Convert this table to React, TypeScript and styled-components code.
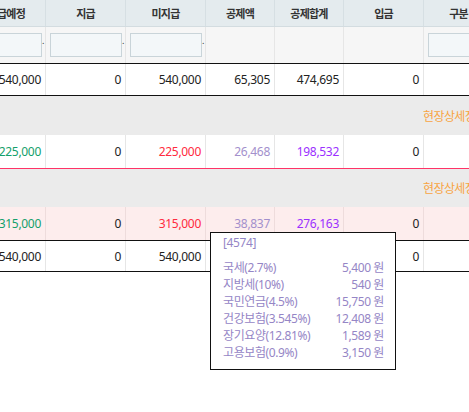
import React from 'react';
import styled, { createGlobalStyle } from 'styled-components';

const GlobalStyle = createGlobalStyle`
  html, body { margin: 0; padding: 0; background: #fff; overflow: hidden; }
  body { font-family: "Noto Sans", "Noto Sans CJK KR", sans-serif; }
`;

const COLS = '45px 80px 80px 69px 69px 80px 70px';

const Page = styled.div`
  position: relative;
  width: 469px;
  height: 412px;
  overflow: hidden;
`;

const Grid = styled.div`
  width: 493px;
`;

const Row = styled.div<{ $h: number; $bg?: string; $top?: string; $bottom?: string; $line?: string }>`
  display: grid;
  grid-template-columns: ${COLS};
  height: ${(p) => p.$h}px;
  background: ${(p) => p.$bg || '#fff'};
  border-top: ${(p) => (p.$top ? `1px solid ${p.$top}` : 'none')};
  border-bottom: ${(p) => (p.$bottom ? `1px solid ${p.$bottom}` : 'none')};
  --line: ${(p) => p.$line || '#e6e6e6'};
`;

const HeadCell = styled.div<{ $end?: boolean }>`
  display: flex;
  align-items: center;
  justify-content: ${(p) => (p.$end ? 'flex-end' : 'center')};
  padding-right: ${(p) => (p.$end ? '20px' : '0')};
  overflow: hidden;
  white-space: nowrap;
  font-family: "Noto Sans CJK KR", sans-serif;
  font-size: 11px;
  font-weight: 700;
  letter-spacing: -0.8px;
  color: #333;
  & + & { border-left: 1px solid var(--line); }
`;

const FilterCell = styled.div<{ $end?: boolean }>`
  display: flex;
  align-items: center;
  justify-content: ${(p) => (p.$end ? 'flex-end' : 'flex-start')};
  padding-left: ${(p) => (p.$end ? '0' : '4px')};
  overflow: hidden;
  white-space: nowrap;
  & + & { border-left: 1px solid var(--line); }
`;

const FilterInput = styled.input`
  box-sizing: border-box;
  flex: none;
  width: 72px;
  height: 24px;
  margin: 0;
  padding: 0 4px;
  border: 1px solid #c9d4d9;
  border-radius: 0;
  background: #f3f7f9;
  outline: none;
`;

const Dot = styled.span`
  flex: none;
  width: 3px;
  font-size: 9px;
  line-height: 9px;
  color: #333;
  margin-bottom: 10px;
`;

const NumCell = styled.div<{ $color?: string }>`
  display: flex;
  align-items: center;
  justify-content: flex-end;
  padding-right: 4px;
  overflow: hidden;
  white-space: nowrap;
  font-size: 12px;
  letter-spacing: -0.3px;
  color: ${(p) => p.$color || '#222'};
  & + & { border-left: 1px solid var(--line); }
`;

const SpacerCell = styled.div<{ $span: number }>`
  grid-column: span ${(p) => p.$span};
`;

const DetailLink = styled.div`
  display: flex;
  align-items: center;
  overflow: hidden;
  white-space: nowrap;
  font-size: 12px;
  letter-spacing: -0.6px;
  color: #f8a443;
`;

const Tooltip = styled.div`
  position: absolute;
  left: 210px;
  top: 232px;
  box-sizing: border-box;
  width: 186px;
  height: 138px;
  padding: 1px 11px 8px 12px;
  background: #fff;
  border: 1px solid #111;
  color: #9586c6;
  font-size: 12px;
  letter-spacing: -0.4px;
`;

const TipTitle = styled.div`
  line-height: 17px;
  margin-bottom: 8px;
`;

const TipRow = styled.div`
  display: flex;
  justify-content: space-between;
  line-height: 17px;
  white-space: nowrap;
`;

const GREEN = '#13a06b';
const RED = '#ff2a40';
const LAV = '#a390cc';
const PURPLE = '#9b30ff';

type CellDef = { v: string; c?: string };

const heads = ['지급예정', '지급', '미지급', '공제액', '공제합계', '입금', '구분'];

const r1: CellDef[] = [{ v: '540,000' }, { v: '0' }, { v: '540,000' }, { v: '65,305' }, { v: '474,695' }, { v: '0' }, { v: '' }];
const r2: CellDef[] = [
  { v: '225,000', c: GREEN }, { v: '0' }, { v: '225,000', c: RED }, { v: '26,468', c: LAV }, { v: '198,532', c: PURPLE }, { v: '0' }, { v: '' },
];
const r3: CellDef[] = [
  { v: '315,000', c: GREEN }, { v: '0' }, { v: '315,000', c: RED }, { v: '38,837', c: LAV }, { v: '276,163', c: PURPLE }, { v: '0' }, { v: '' },
];
const r4: CellDef[] = [{ v: '540,000' }, { v: '0' }, { v: '540,000' }, { v: '' }, { v: '' }, { v: '0' }, { v: '' }];

const tipRows = [
  ['국세(2.7%)', '5,400 원'],
  ['지방세(10%)', '540 원'],
  ['국민연금(4.5%)', '15,750 원'],
  ['건강보험(3.545%)', '12,408 원'],
  ['장기요양(12.81%)', '1,589 원'],
  ['고용보험(0.9%)', '3,150 원'],
];

const DataRow: React.FC<{ cells: CellDef[]; h: number; bg?: string; top?: string; bottom?: string; line?: string }> = ({
  cells, h, bg, top, bottom, line,
}) => (
  <Row $h={h} $bg={bg} $top={top} $bottom={bottom} $line={line}>
    {cells.map((c, i) => (
      <NumCell key={i} $color={c.c}>{c.v}</NumCell>
    ))}
  </Row>
);

const Spacer: React.FC<{ h: number }> = ({ h }) => (
  <Row $h={h} $bg="#ebebeb">
    <SpacerCell $span={6} />
    <DetailLink>현장상세정보</DetailLink>
  </Row>
);

export default function App() {
  return (
    <Page>
      <GlobalStyle />
      <Grid>
        <Row $h={26} $bg="#e4ebee" $bottom="#d3dce0" $line="#d6dfe3">
          {heads.map((h, i) => (
            <HeadCell key={h} $end={i === 0}>{h}</HeadCell>
          ))}
        </Row>
        <Row $h={36} $bg="#f6f6f6" $line="#e6e6e6">
          {[true, true, true, false, false, false, true].map((has, i) => (
            <FilterCell key={i} $end={i === 0}>
              {has && (
                <>
                  <FilterInput type="text" />
                  <Dot>.</Dot>
                </>
              )}
            </FilterCell>
          ))}
        </Row>
        <DataRow cells={r1} h={31} top="#111" bottom="#111" />
        <Spacer h={39} />
        <DataRow cells={r2} h={33} bottom="#ff3366" />
        <Spacer h={38} />
        <DataRow cells={r3} h={33} bg="#fdeded" bottom="#111" line="#eedcdc" />
        <DataRow cells={r4} h={30} bottom="#111" />
      </Grid>
      <Tooltip>
        <TipTitle>[4574]</TipTitle>
        {tipRows.map(([k, v]) => (
          <TipRow key={k}>
            <span>{k}</span>
            <span>{v}</span>
          </TipRow>
        ))}
      </Tooltip>
    </Page>
  );
}
